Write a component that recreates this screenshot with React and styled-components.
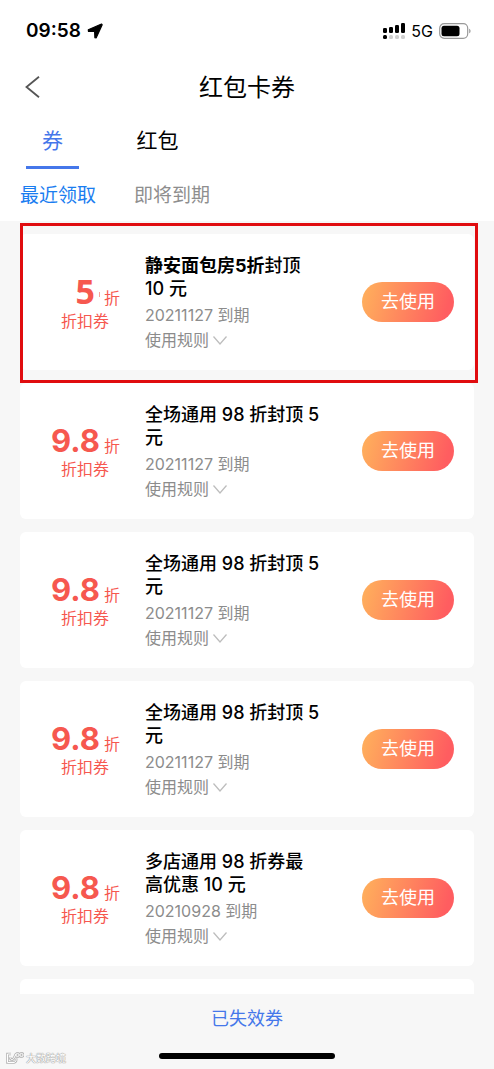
import React from "react";
import styled, { createGlobalStyle } from "styled-components";

const GlobalStyle = createGlobalStyle`
  *, *::before, *::after { box-sizing: border-box; }
  body {
    margin: 0;
    background: #f7f7f7;
    font-family: Inter, "Noto Sans CJK SC", sans-serif;
    color: #000;
  }
  button { font-family: inherit; border: 0; padding: 0; background: none; cursor: pointer; }
  h1, h2, p { margin: 0; }
`;

const Screen = styled.div`
  position: relative;
  display: flex;
  flex-direction: column;
  height: 100vh;
  overflow: hidden;
`;

const Header = styled.header`
  background: #fff;
`;

const StatusBar = styled.div`
  display: flex;
  align-items: center;
  justify-content: space-between;
  height: 62px;
  padding: 0 23px 0 26px;
`;

const StatusGroup = styled.div`
  display: flex;
  align-items: center;
  gap: 6px;
`;

const Clock = styled.span`
  font-size: 19px;
  line-height: 24px;
  font-weight: 600;
`;

const Network = styled.span`
  font-size: 16px;
  line-height: 20px;
  font-weight: 400;
`;

const NavBar = styled.div`
  display: grid;
  grid-template-columns: 32px 1fr 32px;
  align-items: center;
  height: 50px;
  padding: 0 16px;
`;

const BackButton = styled.button`
  display: flex;
  align-items: center;
  justify-content: center;
  height: 32px;
`;

const PageTitle = styled.h1`
  padding-top: 2px;
  font-size: 24px;
  line-height: 32px;
  font-weight: 400;
  text-align: center;
`;

const Tabs = styled.nav`
  display: flex;
  gap: 52px;
  padding: 0 26px;
`;

const Tab = styled.button`
  width: 53px;
  height: 57px;
  padding-top: 4px;
  font-size: 21px;
  line-height: 28px;
  color: ${(p) => (p.$active ? "#4577ea" : "#000")};
  border-bottom: 3px solid ${(p) => (p.$active ? "#4577ea" : "transparent")};
`;

const Filters = styled.div`
  display: flex;
  gap: 38px;
  height: 52px;
  padding: 2px 20px 0;
`;

const Filter = styled.button`
  font-size: 19px;
  line-height: 28px;
  color: ${(p) => (p.$active ? "#1a7df0" : "#8e8e8e")};
`;

const List = styled.main`
  display: flex;
  flex: 1;
  flex-direction: column;
  gap: 13px;
  min-height: 0;
  padding: 13px 20px 0;
  overflow: hidden;
`;

const Card = styled.article`
  position: relative;
  display: grid;
  grid-template-columns: 105px minmax(0, 180px) 1fr;
  flex: none;
  align-items: center;
  min-height: 136px;
  padding: 0 20px;
  border-radius: 6px;
  background: #fff;
`;

const Highlight = styled.div`
  position: absolute;
  z-index: 1;
  inset: -11px -4px -13px 0;
  border: 3px solid #e00c0f;
  pointer-events: none;
`;

const Discount = styled.div`
  padding-top: 5px;
  color: #f6584f;
  font-size: 16px;
  line-height: 20px;
`;

const Amount = styled.div`
  display: flex;
  align-items: baseline;
  justify-content: flex-end;
  gap: 4px;
  padding-right: 26px;
  line-height: 26px;
`;

const Kind = styled.p`
  padding-right: 15px;
  text-align: center;
`;

const Unit = styled.span`
  width: 15px;
`;

const Value = styled.strong`
  font-family: ${(p) => (p.$plain ? '"Open Sans", sans-serif' : "inherit")};
  font-size: ${(p) => (p.$plain ? "34px" : "31px")};
  font-weight: 700;
`;

const Tick = styled.span`
  width: 1px;
  height: 5px;
  align-self: center;
  background: #f9a39e;
`;

const Details = styled.div`
  padding-top: 2px;
  color: #8c8c8c;
  font-size: 16px;
  line-height: 25px;
`;

const CouponTitle = styled.h2`
  margin-bottom: 3px;
  color: #000;
  font-size: 18px;
  line-height: 23px;
  font-weight: 500;
`;

const Bold = styled.span`
  font-weight: 700;
`;

const Rules = styled.button`
  display: flex;
  align-items: center;
  gap: 4px;
  color: inherit;
  font-size: 16px;
  line-height: 25px;
`;

const UseButton = styled.button`
  justify-self: end;
  width: 92px;
  height: 40px;
  border-radius: 20px;
  color: #fff;
  font-size: 18px;
  line-height: 40px;
  background: linear-gradient(105deg, #ffad5c 5%, #ff5d60 90%);
`;

const Footer = styled.footer`
  display: flex;
  flex-direction: column;
  align-items: center;
  justify-content: space-between;
  height: 75px;
  padding: 11px 0 10px;
`;

const ExpiredLink = styled.a`
  color: #4577ea;
  font-size: 18px;
  line-height: 28px;
  text-decoration: none;
`;

const HomeIndicator = styled.div`
  width: 176px;
  height: 6px;
  border-radius: 3px;
  background: #000;
`;

const Watermark = styled.div`
  position: absolute;
  left: 6px;
  bottom: 4px;
  display: flex;
  align-items: center;
  gap: 2px;
  color: #fff;
  font-size: 10px;
  line-height: 14px;
  text-shadow: 0 0 1px #999, 0 0 1px #999, 0 0 1px #aaa;
`;

const coupons = [
  { value: "5", plain: true, title: <><Bold>静安面包房5折</Bold>封顶<br />10 元</>, date: "20211127", highlight: true },
  { value: "9.8", title: <>全场通用 98 折封顶 5<br />元</>, date: "20211127" },
  { value: "9.8", title: <>全场通用 98 折封顶 5<br />元</>, date: "20211127" },
  { value: "9.8", title: <>全场通用 98 折封顶 5<br />元</>, date: "20211127" },
  { value: "9.8", title: <>多店通用 98 折券最<br />高优惠 10 元</>, date: "20210928" },
];

function LocationIcon() {
  return (
    <svg width="16" height="16" viewBox="0 0 16 16" aria-hidden="true">
      <path d="M14.500 1 1.300 6.800 1.500 8.300 7.600 8.500 7.900 14.600 9.200 14.800 15.200 1.800Z" fill="#000" stroke="#000" strokeWidth="1.200" strokeLinejoin="round" />
    </svg>
  );
}

function SignalIcon() {
  return (
    <svg width="23" height="17" viewBox="0 0 23 17" aria-hidden="true">
      <rect x="1" y="5" width="4" height="5" rx="1.200" />
      <rect x="7" y="4" width="4" height="6" rx="1.200" />
      <rect x="13" y="2" width="4" height="8" rx="1.200" />
      <rect x="19" y="0" width="4" height="10" rx="1.200" />
      <rect x="1" y="12" width="4" height="4" rx="1.500" />
      <g fill="#cfcfcf">
        <rect x="7" y="12" width="4" height="4" rx="1.500" />
        <rect x="13" y="12" width="4" height="4" rx="1.500" />
        <rect x="19" y="12" width="4" height="4" rx="1.500" />
      </g>
    </svg>
  );
}

function BatteryIcon() {
  return (
    <svg width="32" height="16" viewBox="0 0 32 16" aria-hidden="true">
      <rect x=".7" y=".7" width="28" height="14.600" rx="4.500" fill="none" stroke="#999" strokeWidth="1.200" />
      <rect x="2.500" y="2.700" width="18" height="10.600" rx="2.500" />
      <path d="M30.200 5.700c1.800.7 1.800 3.900 0 4.600z" fill="#999" />
    </svg>
  );
}

function WatermarkLogo() {
  return (
    <svg width="18" height="12" viewBox="0 0 18 12" fill="none" aria-hidden="true">
      <g stroke="#b5b5b5" strokeWidth="2.600">
        <path d="M5 2H1.500v8.500H8C10 10 10.500 8 10 6.500" />
        <path d="M4 5c0 3 3 3.500 4 1l2-4" />
        <circle cx="11.500" cy="3" r="1.600" />
        <circle cx="15.500" cy="3" r="1.600" />
      </g>
      <g stroke="#fff">
        <path d="M5 2H1.500v8.500H8C10 10 10.500 8 10 6.500" />
        <path d="M4 5c0 3 3 3.500 4 1l2-4" />
        <circle cx="11.500" cy="3" r="1.600" />
        <circle cx="15.500" cy="3" r="1.600" />
      </g>
    </svg>
  );
}

function Coupon({ value, plain, title, date, highlight }) {
  return (
    <Card>
      <Discount>
        <Amount>
          <Value $plain={plain}>{value}</Value>
          {plain && <Tick />}
          <Unit>折</Unit>
        </Amount>
        <Kind>折扣券</Kind>
      </Discount>
      <Details>
        <CouponTitle>{title}</CouponTitle>
        <p>{date} 到期</p>
        <Rules type="button">
          使用规则
          <svg width="14" height="9" viewBox="0 0 14 9" fill="none" stroke="#bdbdbd" strokeWidth="1.300" aria-hidden="true">
            <path d="M.5.5 7 8 13.500.5" />
          </svg>
        </Rules>
      </Details>
      <UseButton type="button">去使用</UseButton>
      {highlight && <Highlight />}
    </Card>
  );
}

export default function App() {
  return (
    <>
      <GlobalStyle />
      <Screen>
        <Header>
          <StatusBar>
            <StatusGroup>
              <Clock>09:58</Clock>
              <LocationIcon />
            </StatusGroup>
            <StatusGroup>
              <SignalIcon />
              <Network>5G</Network>
              <BatteryIcon />
            </StatusGroup>
          </StatusBar>
          <NavBar>
            <BackButton type="button" aria-label="返回">
              <svg width="15" height="22" viewBox="0 0 15 22" fill="none" stroke="#555" strokeWidth="1.800" aria-hidden="true">
                <path d="M14 .8 1.500 11 14 21.200" />
              </svg>
            </BackButton>
            <PageTitle>红包卡券</PageTitle>
          </NavBar>
          <Tabs>
            <Tab type="button" $active>券</Tab>
            <Tab type="button">红包</Tab>
          </Tabs>
          <Filters>
            <Filter type="button" $active>最近领取</Filter>
            <Filter type="button">即将到期</Filter>
          </Filters>
        </Header>
        <List>
          {coupons.map((coupon, i) => (
            <Coupon key={i} {...coupon} />
          ))}
          <Card />
        </List>
        <Footer>
          <ExpiredLink href="#expired">已失效券</ExpiredLink>
          <HomeIndicator />
        </Footer>
        <Watermark>
          <WatermarkLogo />
          大数跨境
        </Watermark>
      </Screen>
    </>
  );
}
